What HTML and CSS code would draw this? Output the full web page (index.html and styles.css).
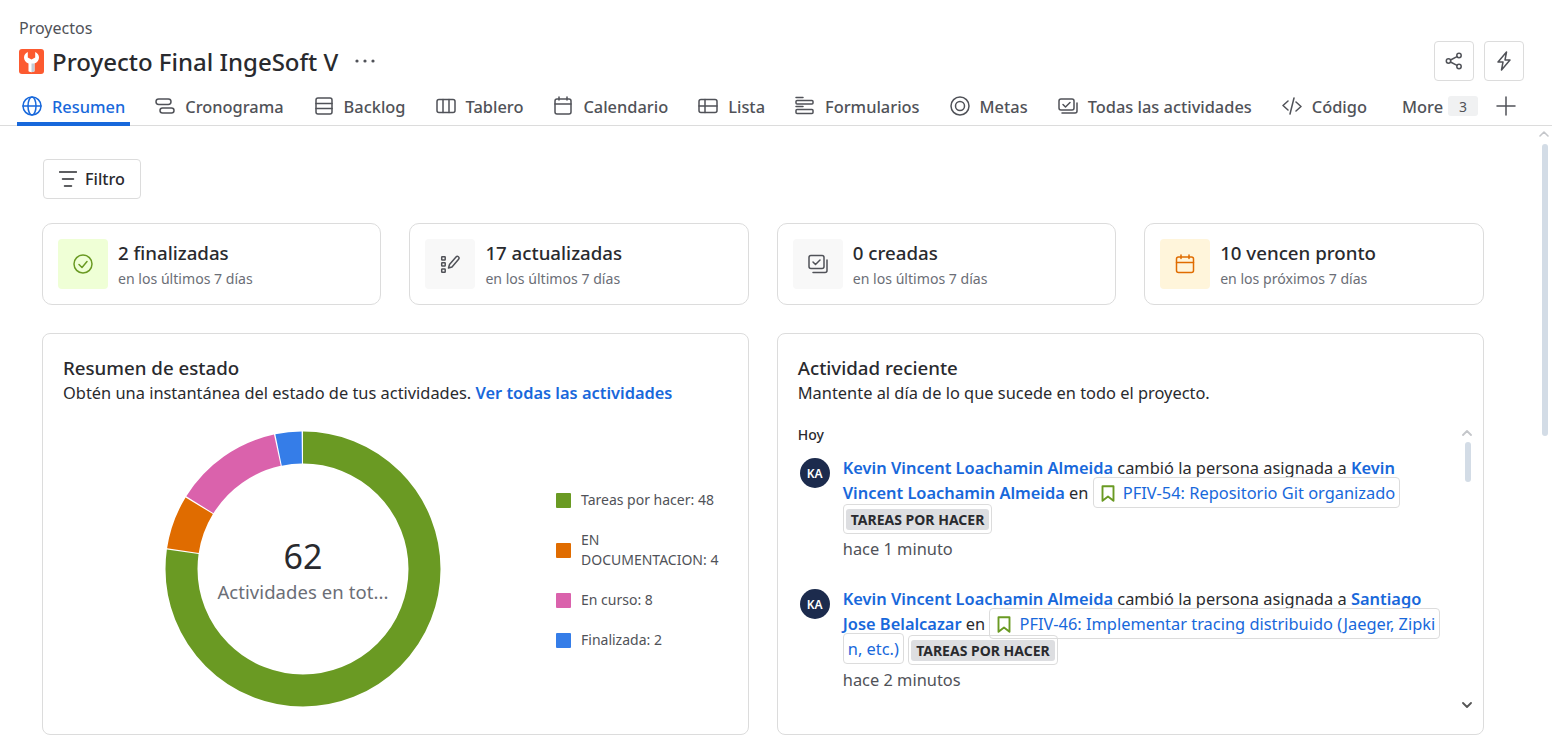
FILE: index.html
```html
<!DOCTYPE html>
<html lang="es">
<head>
<meta charset="utf-8">
<title>Proyecto Final IngeSoft V</title>
<link rel="stylesheet" href="styles.css">
</head>
<body>
<div class="app">
  <header class="top">
    <div class="crumb">Proyectos</div>
    <div class="title-row">
      <svg class="logo" viewBox="0 0 25 25"><rect width="25" height="25" rx="3" fill="#fc5a30"/><path d="M9.500 22V14.500C6.500 13.400 5 11 5 8.500 5 6 6.500 4 8.800 3V8.500L12.500 10.500 16.200 8.500V3C18.500 4 20 6 20 8.500 20 11 18.500 13.400 15.500 14.500V22C15.500 23.500 9.500 23.500 9.500 22Z" fill="#fff"/><path d="M12.500 14.500H15.500V22C15.500 22.800 14 23.100 12.500 23.100Z" fill="#c4cdd8"/></svg>
      <h1 class="title">Proyecto Final IngeSoft V</h1>
      <svg class="dots" viewBox="0 0 22 6"><circle cx="3" cy="3" r="1.6"/><circle cx="11" cy="3" r="1.6"/><circle cx="19" cy="3" r="1.6"/></svg>
      <div class="actions">
        <button class="act"><svg class="ic18" viewBox="0 0 18 18"><circle cx="14" cy="3.5" r="2.2"/><circle cx="3.5" cy="9" r="2.2"/><circle cx="14" cy="14.5" r="2.2"/><path d="M5.5 8 12 4.600M5.500 10 12 13.400"/></svg></button>
        <button class="act"><svg class="ic20" viewBox="0 0 20 20"><path d="M12.500 1 4 11H9M7.500 19 16 9H11L12.500 1M9 11 7.500 19"/></svg></button>
      </div>
    </div>
  </header>

  <nav class="tabs">
    <a class="tab active"><svg class="ic20" viewBox="0 0 20 20"><circle cx="10" cy="10" r="9"/><ellipse cx="10" cy="10" rx="4" ry="9"/><path d="M1 10H19"/></svg>Resumen</a>
    <a class="tab"><svg class="ic20" viewBox="0 0 20 20"><rect x="1" y="3" width="15" height="5.500" rx="2.700"/><rect x="5" y="12" width="14" height="5" rx="2.500"/></svg>Cronograma</a>
    <a class="tab"><svg class="ic20" viewBox="0 0 20 20"><rect x="2" y="2" width="16" height="16" rx="2"/><path d="M2 7.500H18M2 12.500H18"/></svg>Backlog</a>
    <a class="tab"><svg class="ic20" viewBox="0 0 20 20"><rect x="1" y="3.500" width="18" height="13" rx="2"/><path d="M7 3.500V16.500M13 3.500V16.500"/></svg>Tablero</a>
    <a class="tab"><svg class="ic20" viewBox="0 0 20 20"><rect x="2" y="3" width="16" height="15" rx="2"/><path d="M2 8H18M6 1V4M14 1V4"/></svg>Calendario</a>
    <a class="tab"><svg class="ic20" viewBox="0 0 20 20"><rect x="1" y="3.500" width="18" height="13" rx="2"/><path d="M1 10H19M7 3.500V16.500"/></svg>Lista</a>
    <a class="tab"><svg class="ic20" viewBox="0 0 20 20"><path d="M1 1.500H8M1 10.500H8"/><rect x="1" y="4.500" width="17" height="3.500" rx="1"/><rect x="1" y="13.500" width="17" height="4" rx="1"/></svg>Formularios</a>
    <a class="tab"><svg class="ic20" viewBox="0 0 20 20"><circle cx="10" cy="10" r="9"/><circle cx="10" cy="10" r="4.500"/></svg>Metas</a>
    <a class="tab"><svg class="ic20" viewBox="0 0 20 20"><rect x="1" y="3" width="15" height="11" rx="2"/><path d="M5 8.500 7.500 11 12 6.500"/><path d="M19 7V15a2 2 0 0 1-2 2H4"/></svg>Todas las actividades</a>
    <a class="tab"><svg class="ic20" viewBox="0 0 20 20"><path d="M6 5 1 9.500 6 14M14 6 19 10.500 14 15M12 2 8 18"/></svg>Código</a>
    <a class="tab more">More<span class="count">3</span></a>
    <button class="plus"><svg class="ic20" viewBox="0 0 20 20"><path d="M10 1V19M1 10H19"/></svg></button>
  </nav>

  <main class="main">
    <button class="filter"><svg class="ic18 dark" viewBox="0 0 18 18"><path d="M0.500 2H17.500M3.500 9H14.500M5.500 16H12.500"/></svg>Filtro</button>

    <section class="stats">
      <article class="stat">
        <div class="stat-ic green"><svg class="ic20" viewBox="0 0 20 20"><circle cx="10" cy="10" r="9"/><path d="M6 10.500 9 13.500 14 7.500"/></svg></div>
        <div class="stat-x"><div class="stat-t">2 finalizadas</div><div class="stat-s">en los últimos 7 días</div></div>
      </article>
      <article class="stat">
        <div class="stat-ic grey"><svg class="ic20" viewBox="0 0 20 20"><rect x="1.700" y="2.700" width="3.500" height="3.200" rx="0.500"/><rect x="1.700" y="8.700" width="3.500" height="3.200" rx="0.500"/><rect x="1.700" y="15" width="3.500" height="3.200" rx="0.500"/><path d="M8.500 14 9.500 10.500 16 3a1.600 1.600 0 0 1 2.600 2.200L12 13Z"/></svg></div>
        <div class="stat-x"><div class="stat-t">17 actualizadas</div><div class="stat-s">en los últimos 7 días</div></div>
      </article>
      <article class="stat">
        <div class="stat-ic grey"><svg class="ic20" viewBox="0 0 20 20"><rect x="1" y="1.500" width="15" height="13" rx="2"/><path d="M5 8 7.500 10.500 12 6"/><path d="M19 6V16.500a2 2 0 0 1-2 2H5"/></svg></div>
        <div class="stat-x"><div class="stat-t">0 creadas</div><div class="stat-s">en los últimos 7 días</div></div>
      </article>
      <article class="stat">
        <div class="stat-ic yellow"><svg class="ic20" viewBox="0 0 20 20"><rect x="1.500" y="3" width="17" height="15.500" rx="2"/><path d="M1.500 8.500H18.500M6 1V4.500M14 1V4.500"/></svg></div>
        <div class="stat-x"><div class="stat-t">10 vencen pronto</div><div class="stat-s">en los próximos 7 días</div></div>
      </article>
    </section>

    <section class="panels">
      <article class="panel">
        <h2 class="p-title">Resumen de estado</h2>
        <p class="p-sub">Obtén una instantánea del estado de tus actividades. <a class="link-b">Ver todas las actividades</a></p>
        <div class="chart">
          <div class="donut">
            <svg viewBox="0 0 276 276" class="donut-svg">
              <circle class="seg s-green" cx="138" cy="138" r="121.500" pathLength="620" stroke-dasharray="479 141" stroke-dashoffset="0" transform="rotate(-90 138 138)"/>
              <circle class="seg s-orange" cx="138" cy="138" r="121.500" pathLength="620" stroke-dasharray="39 581" stroke-dashoffset="-480" transform="rotate(-90 138 138)"/>
              <circle class="seg s-pink" cx="138" cy="138" r="121.500" pathLength="620" stroke-dasharray="79 541" stroke-dashoffset="-520" transform="rotate(-90 138 138)"/>
              <circle class="seg s-blue" cx="138" cy="138" r="121.500" pathLength="620" stroke-dasharray="19 601" stroke-dashoffset="-600" transform="rotate(-90 138 138)"/>
            </svg>
            <div class="donut-c"><div class="num">62</div><div class="lbl">Actividades en tot...</div></div>
          </div>
          <ul class="legend">
            <li><i class="sq s1"></i>Tareas por hacer: 48</li>
            <li><i class="sq s2"></i><span>EN<br>DOCUMENTACION: 4</span></li>
            <li><i class="sq s3"></i>En curso: 8</li>
            <li><i class="sq s4"></i>Finalizada: 2</li>
          </ul>
        </div>
      </article>

      <article class="panel">
        <h2 class="p-title">Actividad reciente</h2>
        <p class="p-sub">Mantente al día de lo que sucede en todo el proyecto.</p>
        <div class="feed">
          <div class="day">Hoy</div>
          <div class="entry">
            <div class="avatar">KA</div>
            <div class="body">
              <a class="link-b">Kevin Vincent Loachamin Almeida</a> cambió la persona asignada a <a class="link-b">Kevin Vincent Loachamin Almeida</a> en <span class="chip"><svg class="mark" viewBox="0 0 14 17"><path d="M1.500 1.200H12.500V15.800L7 11.500 1.500 15.800Z"/></svg>PFIV-54: Repositorio Git organizado</span>
              <span class="chip tagbox"><span class="tag">TAREAS POR HACER</span></span>
              <div class="when">hace 1 minuto</div>
            </div>
          </div>
          <div class="entry">
            <div class="avatar">KA</div>
            <div class="body">
              <a class="link-b">Kevin Vincent Loachamin Almeida</a> cambió la persona asignada a <a class="link-b">Santiago Jose Belalcazar</a> en <span class="chip"><svg class="mark" viewBox="0 0 14 17"><path d="M1.500 1.200H12.500V15.800L7 11.500 1.500 15.800Z"/></svg>PFIV-46: Implementar tracing distribuido (Jaeger, Zipki<br>n, etc.)</span> <span class="chip tagbox"><span class="tag">TAREAS POR HACER</span></span>
              <div class="when">hace 2 minutos</div>
            </div>
          </div>
          <svg class="fs fs-up" viewBox="0 0 10 6"><path d="M1 5 5 1 9 5"/></svg>
          <div class="fs-thumb"></div>
          <svg class="fs fs-down" viewBox="0 0 10 6"><path d="M1 1 5 5 9 1"/></svg>
        </div>
      </article>
    </section>
  </main>

  <svg class="ps ps-up" viewBox="0 0 10 6"><path d="M1 5 5 1 9 5"/></svg>
  <div class="ps-thumb"></div>
</div>
</body>
</html>
```
FILE: styles.css
```css
* { box-sizing: border-box; }
html, body { margin: 0; padding: 0; height: 100%; background: #fff; }
body { font-family: "Noto Sans", sans-serif; font-size: 16px; color: #292a2e; }
.app { position: relative; height: 756px; overflow: hidden; }
svg { display: block; flex: none; fill: none; stroke: currentColor; stroke-width: 1.5; stroke-linecap: round; stroke-linejoin: round; }
.ic20 { width: 20px; height: 20px; }
.ic18 { width: 18px; height: 18px; }

.top { padding: 18px 28px 0 19px; }
.crumb { font-size: 16px; line-height: 20px; color: #505258; }
.title-row { display: flex; align-items: center; margin-top: 3px; height: 40px; }
.logo { width: 25px; height: 25px; stroke: none; margin-right: 8px; }
.logo path { stroke: none; }
.title { margin: 0; padding-top: 2px; font-size: 24px; line-height: 32px; font-weight: 500; color: #292a2e; }
.dots { width: 22px; height: 6px; margin-left: 16px; stroke: none; fill: #505258; }
.actions { margin-left: auto; display: flex; gap: 10px; }
.act { width: 40px; height: 40px; padding: 0; display: flex; align-items: center; justify-content: center; background: #fff; border: 1px solid #dcdcdc; border-radius: 4px; color: #505258; }

.tabs { display: flex; align-items: flex-start; height: 45px; padding: 0 0 0 17px; gap: 20px; border-bottom: 1px solid #dcdcdc; }
.tab { display: flex; align-items: center; gap: 10px; height: 45px; padding: 9px 5px 0; color: #505258; font-size: 16.4px; font-weight: 500; white-space: nowrap; border-bottom: 4px solid transparent; }
.tab.active { color: #1868db; border-bottom-color: #1868db; }
.tab.more { gap: 5px; margin-left: 5px; }
.count { width: 30px; height: 20px; display: flex; align-items: center; justify-content: center; background: #f0f1f2; border-radius: 3px; font-size: 14px; font-weight: 400; color: #505258; }
.plus { padding: 0; margin: 15px 0 0 -7px; border: 0; background: none; color: #505258; }

.main { padding: 33px 68.5px 0 42px; }
.filter { display: flex; align-items: center; gap: 8px; height: 40px; width: 98px; margin-left: 1px; padding: 0 0 0 15px; background: #fff; border: 1px solid #dcdcdc; border-radius: 4px; font: 500 16.2px "Noto Sans", sans-serif; color: #292a2e; }
.stats { display: grid; grid-template-columns: repeat(4, 1fr); gap: 28px; margin-top: 24px; }
.stat { display: flex; gap: 10px; align-items: center; height: 82px; padding: 0 15px; border: 1px solid #dcdcdc; border-radius: 10px; }
.stat-ic { width: 50px; height: 50px; border-radius: 4px; display: flex; align-items: center; justify-content: center; }
.green { background: #efffd6; color: #6a9a23; }
.grey { background: #f8f8f8; color: #505258; }
.yellow { background: #fff5db; color: #e06c00; }
.stat-x { padding-top: 2px; }
.stat-t { font-size: 18.7px; line-height: 24px; font-weight: 500; }
.stat-s { font-size: 14.1px; line-height: 20px; color: #6b6e76; margin-top: 4px; }

.panels { display: grid; grid-template-columns: 1fr 1fr; gap: 28px; margin-top: 28px; }
.panel { height: 402px; padding: 20px; border: 1px solid #dcdcdc; border-radius: 8px; overflow: hidden; }
.p-title { margin: 0; font-size: 18.7px; line-height: 28px; font-weight: 500; }
.p-sub { margin: 0; font-size: 16.4px; line-height: 22px; }
.link-b { color: #1868db; font-weight: 600; }
.chart { display: flex; align-items: flex-start; margin-top: 27px; padding-left: 102px; }
.donut { position: relative; width: 276px; height: 276px; flex: none; }
.donut-svg { width: 276px; height: 276px; }
.seg { stroke-width: 32; stroke-linecap: butt; }
.s-green { stroke: #6a9a23; } .s-orange { stroke: #e06c00; } .s-pink { stroke: #da62ac; } .s-blue { stroke: #357de8; }
.donut-c { position: absolute; inset: 0; display: flex; flex-direction: column; align-items: center; justify-content: center; }
.num { font-size: 34px; line-height: 44px; color: #292a2e; }
.lbl { margin-top: 1px; font-size: 18.5px; letter-spacing: 0.07px; line-height: 26px; color: #6b6e76; white-space: nowrap; }
.legend { list-style: none; margin: 59px 0 0 115px; padding: 0; display: flex; flex-direction: column; gap: 20px; font-size: 14px; line-height: 20px; color: #505258; }
.legend li { display: flex; align-items: center; gap: 10px; white-space: nowrap; }
.sq { width: 15px; height: 15px; border-radius: 1px; flex: none; }
.s1 { background: #6a9a23; } .s2 { background: #e06c00; } .s3 { background: #da62ac; } .s4 { background: #357de8; }

.feed { position: relative; margin-top: 20px; }
.day { font-size: 14px; line-height: 22px; font-weight: 500; color: #292a2e; }
.entry { display: flex; gap: 13px; padding-left: 2px; margin-top: 9px; margin-bottom: 10px; width: 660px; height: 121px; }
.entry + .entry { margin-top: 0; }
.avatar { width: 30px; height: 30px; margin-top: 3px; border-radius: 50%; background: #1c2b4d; color: #fff; font-size: 12px; font-weight: 600; display: flex; align-items: center; justify-content: center; flex: none; }
.body { width: 606px; font-size: 16.4px; line-height: 25px; }
.chip { color: #1868db; border: 1px solid #dcdcdc; border-radius: 4px; padding: 3px 4px; -webkit-box-decoration-break: clone; box-decoration-break: clone; }
.mark { display: inline-block; width: 14px; height: 17px; vertical-align: -3px; margin: 0 8px 0 3px; color: #6a9a23; stroke-width: 1.9; }
.tagbox { display: inline-block; vertical-align: middle; margin: -4px 0 -2px; padding: 0 2px; height: 30px; line-height: 28px; }
.tag { background: #dddee1; color: #292a2e; font-size: 14px; font-weight: 700; padding: 1px 5px; border-radius: 3px; }
.when { color: #505258; line-height: 24px; margin-top: 5px; }
.fs { position: absolute; width: 10px; height: 6px; right: -9px; stroke-width: 1.8; }
.fs-up { top: 6px; color: #c4c6ca; }
.fs-down { top: 278px; color: #555; }
.fs-thumb { position: absolute; right: -8px; top: 18px; width: 6px; height: 40px; border-radius: 3px; background: #d3dce6; }
.ps { position: absolute; left: 1539px; top: 131px; width: 10px; height: 6px; color: #c4c6ca; stroke-width: 1.6; }
.ps-thumb { position: absolute; left: 1542px; top: 144px; width: 6px; height: 292px; border-radius: 3px; background: #d3dce6; }
```
